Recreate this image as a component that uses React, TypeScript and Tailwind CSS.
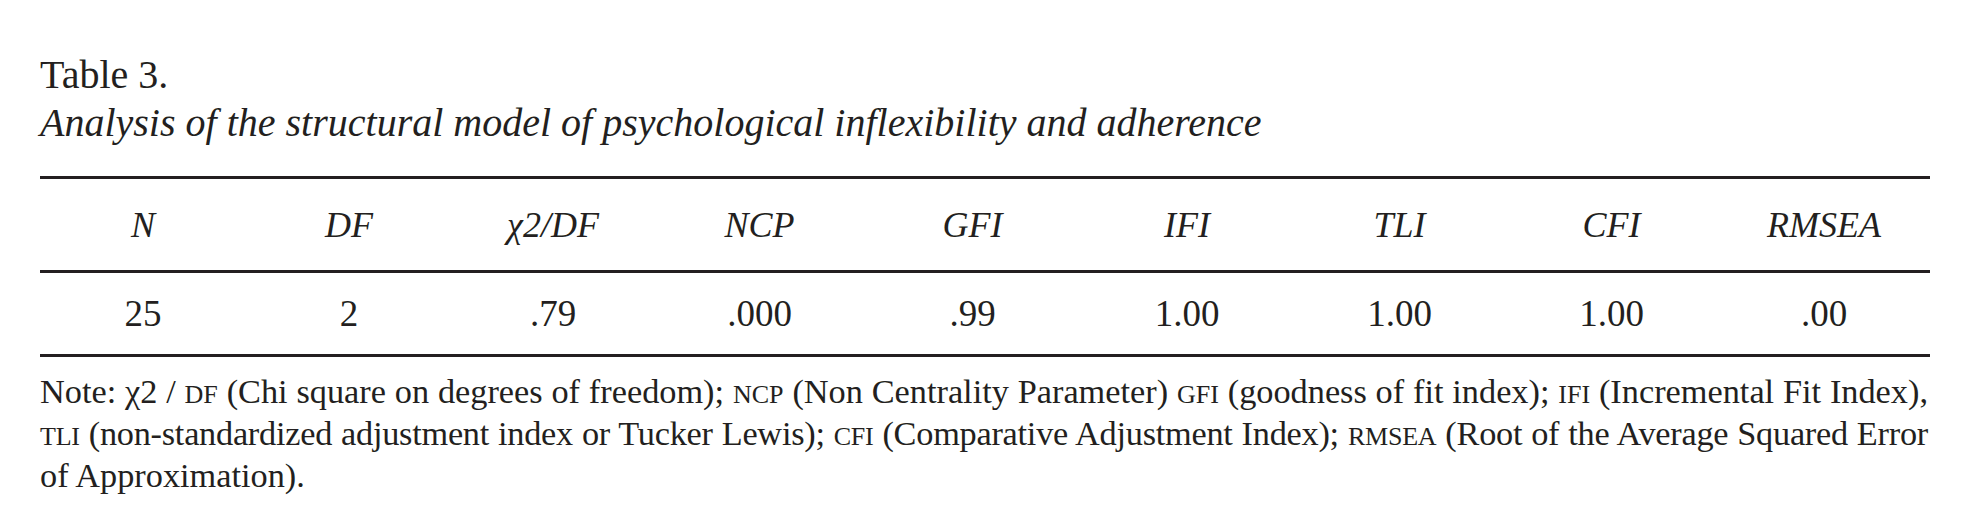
import React from 'react';

const headers = ['N', 'DF', 'χ2/DF', 'NCP', 'GFI', 'IFI', 'TLI', 'CFI', 'RMSEA'];
const values = ['25', '2', '.79', '.000', '.99', '1.00', '1.00', '1.00', '.00'];

const cols = 'grid-cols-[206px_206px_202px_211px_215px_214px_211px_213px_212px]';

function Abbr({ children }: { children: React.ReactNode }) {
  return <span className="text-[0.76em]">{children}</span>;
}

export default function App() {
  return (
    <div className="min-h-[529px] w-[1969px] bg-white font-['Liberation_Serif','Times_New_Roman',serif] text-[#231f20]">
      <div className="w-[1930px] pl-[40px] pt-[51px]">
        <h2 className="text-[40px] leading-[48px]">Table 3.</h2>
        <p className="text-[40px] italic leading-[48px]">
          Analysis of the structural model of psychological inflexibility and adherence
        </p>

        <div className="mt-[29px] h-[3px] bg-[#231f20]" />
        <div className={`grid h-[91px] ${cols} items-center text-center text-[36px] italic`}>
          {headers.map((h) => (
            <span key={h}>{h}</span>
          ))}
        </div>
        <div className="h-[3px] bg-[#231f20]" />
        <div className={`grid h-[81px] ${cols} items-center text-center text-[37px]`}>
          {values.map((v, i) => (
            <span key={i}>{v}</span>
          ))}
        </div>
        <div className="h-[3px] bg-[#231f20]" />

        <div className="mt-[15px] w-[1888px] whitespace-nowrap text-[34.3px] leading-[38px]">
          <p className="text-justify [text-align-last:justify]">
            Note: χ2 / <Abbr>DF</Abbr> (Chi square on degrees of freedom); <Abbr>NCP</Abbr> (Non Centrality
            Parameter) <Abbr>GFI</Abbr> (goodness of fit index); <Abbr>IFI</Abbr> (Incremental Fit Index),
          </p>
          <p className="text-justify tracking-[-0.25px] [text-align-last:justify]">
            <Abbr>TLI</Abbr> (non-standardized adjustment index or Tucker Lewis); <Abbr>CFI</Abbr> (Comparative
            Adjustment Index); <Abbr>RMSEA</Abbr> (Root of the Average Squared Error
          </p>
          <p>of Approximation).</p>
        </div>
      </div>
    </div>
  );
}
